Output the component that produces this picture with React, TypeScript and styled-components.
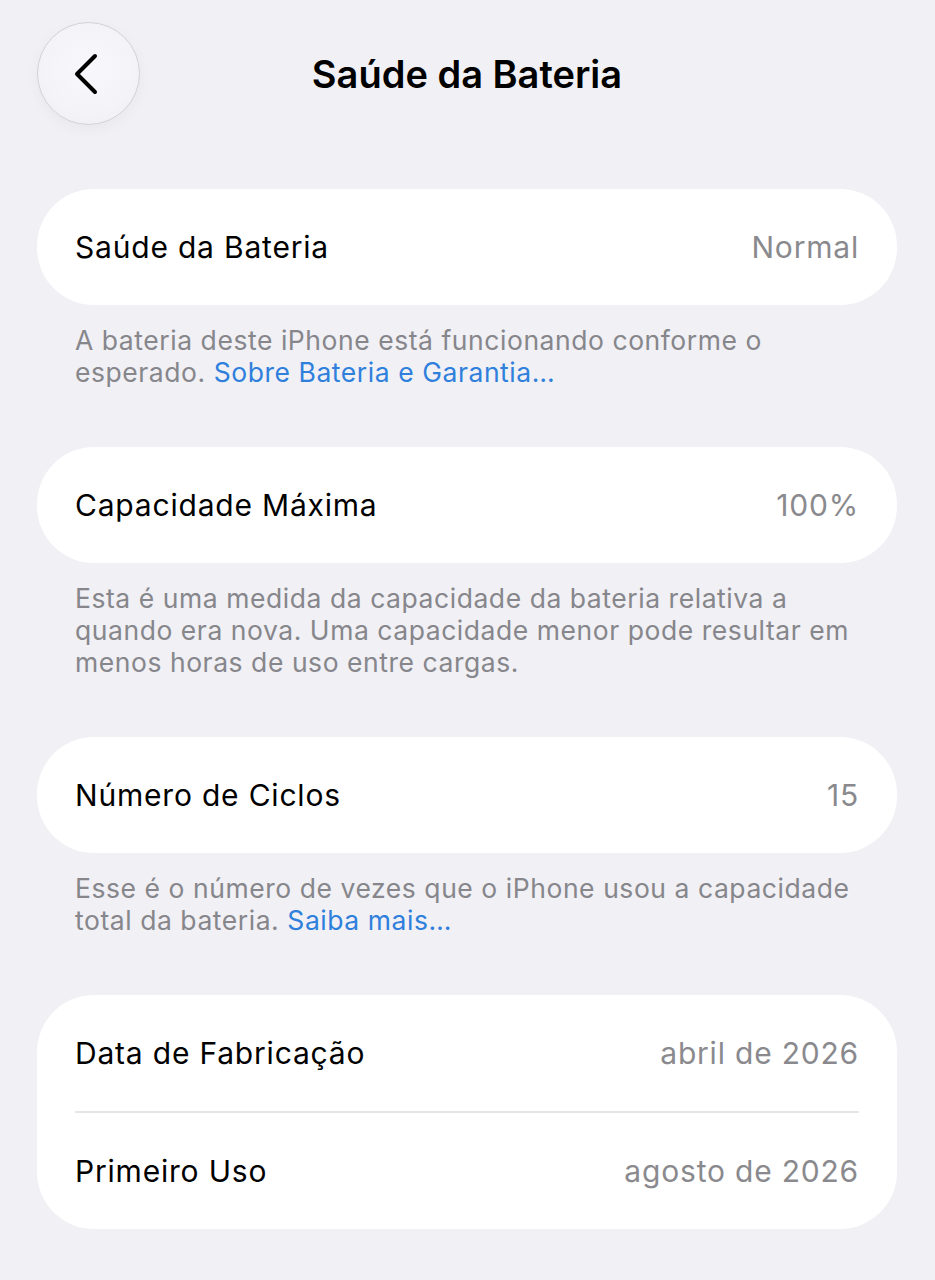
import React from 'react';
import styled, { createGlobalStyle } from 'styled-components';

const GlobalStyle = createGlobalStyle`
  html, body {
    margin: 0;
    padding: 0;
    background: #f0f0f5;
  }
  body {
    font-family: Inter, "Noto Sans", sans-serif;
    -webkit-font-smoothing: antialiased;
  }
`;

const Page = styled.div`
  width: 935px;
  min-height: 1280px;
  background: #f0f0f5;
  box-sizing: border-box;
  padding: 22px 38px 0 37px;
  display: flex;
  flex-direction: column;
`;

const Header = styled.header`
  display: grid;
  grid-template-columns: 103px 1fr 103px;
  align-items: center;
  height: 103px;
  margin-bottom: 64px;
`;

const BackButton = styled.button`
  width: 103px;
  height: 103px;
  border-radius: 50%;
  border: 1px solid #d2d2d6;
  background: radial-gradient(circle at 50% 45%, #f7f7fc 0%, #f3f3f8 60%, #ececf1 100%);
  box-shadow: 0 4px 14px rgba(0, 0, 0, 0.04);
  display: flex;
  align-items: center;
  justify-content: center;
  padding: 0 6px 0 0;
`;

const Title = styled.h1`
  margin: 0;
  text-align: center;
  font-size: 38px;
  font-weight: 600;
  color: #000;
`;

const Section = styled.section`
  display: flex;
  flex-direction: column;
  margin-bottom: 59px;
`;

const Card = styled.div`
  background: #fff;
  border-radius: 57px;
  padding: 0 38px;
  display: flex;
  flex-direction: column;
`;

const Row = styled.div<{ divider?: boolean }>`
  height: 116px;
  display: flex;
  align-items: center;
  justify-content: space-between;
  border-bottom: ${({ divider }) => (divider ? '2px solid #e6e6ea' : 'none')};
  font-size: 30px;
  letter-spacing: 0.8px;
`;

const Label = styled.span`
  color: #000;
`;

const Value = styled.span`
  color: #8a8a8e;
`;

const Footer = styled.p`
  margin: 19px 0 0;
  padding: 0 38px;
  font-size: 26.5px;
  line-height: 32px;
  color: #86868b;
  letter-spacing: 0.55px;
`;

const Link = styled.span`
  color: #2f7fdc;
`;

const Chevron = () => (
  <svg width="28" height="42" viewBox="0 0 28 42" fill="none">
    <path
      d="M23 3 L5 21 L23 39"
      stroke="#000"
      strokeWidth="4"
      strokeLinecap="round"
      strokeLinejoin="round"
    />
  </svg>
);

const App: React.FC = () => (
  <>
    <GlobalStyle />
    <Page>
      <Header>
        <BackButton aria-label="Voltar">
          <Chevron />
        </BackButton>
        <Title>Saúde da Bateria</Title>
        <div />
      </Header>

      <Section>
        <Card>
          <Row>
            <Label>Saúde da Bateria</Label>
            <Value>Normal</Value>
          </Row>
        </Card>
        <Footer>
          A bateria deste iPhone está funcionando conforme o esperado.{' '}
          <Link>Sobre Bateria e Garantia…</Link>
        </Footer>
      </Section>

      <Section>
        <Card>
          <Row>
            <Label>Capacidade Máxima</Label>
            <Value>100%</Value>
          </Row>
        </Card>
        <Footer>
          Esta é uma medida da capacidade da bateria relativa a quando era nova. Uma
          capacidade menor pode resultar em menos horas de uso entre cargas.
        </Footer>
      </Section>

      <Section>
        <Card>
          <Row>
            <Label>Número de Ciclos</Label>
            <Value>15</Value>
          </Row>
        </Card>
        <Footer>
          Esse é o número de vezes que o iPhone usou a capacidade total da bateria.{' '}
          <Link>Saiba mais…</Link>
        </Footer>
      </Section>

      <Section>
        <Card>
          <Row divider>
            <Label>Data de Fabricação</Label>
            <Value>abril de 2026</Value>
          </Row>
          <Row>
            <Label>Primeiro Uso</Label>
            <Value>agosto de 2026</Value>
          </Row>
        </Card>
      </Section>
    </Page>
  </>
);

export default App;
